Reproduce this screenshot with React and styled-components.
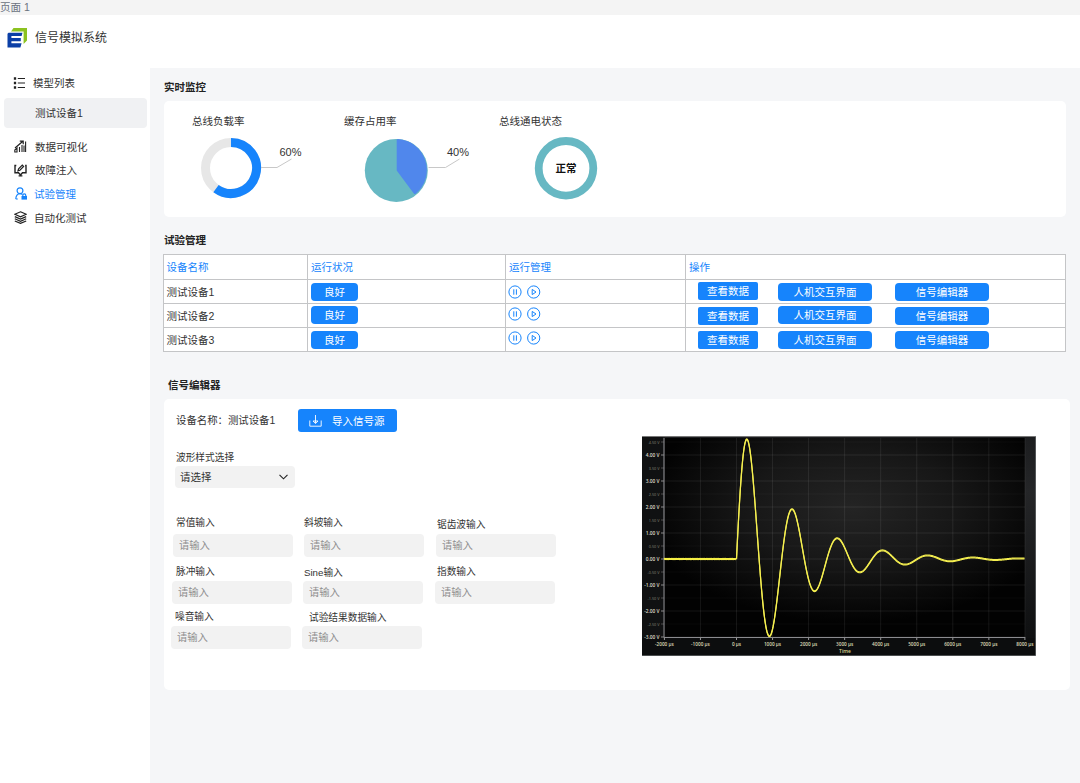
import React from "react";
import styled, { createGlobalStyle } from "styled-components";

const BLUE = "#1684fc";
const TEAL = "#67b8c3";

const GlobalStyle = createGlobalStyle`
  * {
    box-sizing: border-box;
  }

  body {
    margin: 0;
    background: #fff;
    color: #333;
    font-family: "Liberation Sans", "Noto Sans CJK SC", sans-serif;
    font-size: 10.5px;
    line-height: 16px;
  }
`;

const Page = styled.div`
  width: 1080px;
  height: 783px;
  overflow: hidden;
`;

const TabBar = styled.div`
  height: 15px;
  background: #f4f4f4;
  color: #6b7280;
  line-height: 15px;
  white-space: pre;
`;

const Header = styled.header`
  display: flex;
  align-items: center;
  height: 53px;
  padding: 0 0 8px 7px;
  gap: 8px;
  font-size: 12px;
`;

const Body = styled.div`
  display: flex;
  height: 715px;
`;

const Sidebar = styled.nav`
  width: 150px;
  padding-top: 3px;
`;

const NavItem = styled.div`
  display: flex;
  align-items: center;
  height: 23.7px;
  padding-left: ${props => props.$left || 14}px;
  gap: ${props => props.$gap || 8}px;
  color: ${props => (props.$active ? BLUE : "#333")};
`;

const SubItem = styled.div`
  height: 30px;
  margin: 3.3px 3px 6.7px 4px;
  padding-left: 31px;
  border-radius: 4px;
  background: #f0f1f3;
  line-height: 30px;
`;

const Main = styled.main`
  flex: 1;
  padding: 11px 0 0 14px;
  background: #f5f6f8;
`;

const SectionTitle = styled.h2`
  margin: 0 0 0 ${props => props.$left || 0}px;
  color: #222;
  font-size: 10.5px;
  font-weight: 700;
  line-height: 16px;
`;

const MonitorCard = styled.section`
  display: grid;
  grid-template-columns: 152px 155px 1fr;
  width: 902px;
  height: 116px;
  margin: 6px 0 15px;
  padding: 12px 0 0 28px;
  border-radius: 5px;
  background: #fff;
`;

const GaugeDrawing = styled.svg`
  display: block;
  margin-top: 5px;
  font-size: 11px;
`;

const Table = styled.div`
  width: 903px;
  margin: 6px 0 25px -1px;
  border-top: 1px solid #c4c5c7;
  border-left: 1px solid #c4c5c7;
  background: #fff;
`;

const Row = styled.div`
  display: grid;
  grid-template-columns: 144px 198px 180px 380px;
  grid-template-rows: 100%;
  height: ${props => (props.$head ? 25 : 24)}px;
  color: ${props => (props.$head ? BLUE : "#333")};
  line-height: 24px;
`;

const Cell = styled.div`
  display: flex;
  align-items: flex-start;
  padding-left: ${props => props.$left || 3}px;
  border-right: 1px solid #c4c5c7;
  border-bottom: 1px solid #c4c5c7;
`;

const Button = styled.button`
  width: ${props => props.$width}px;
  height: 18px;
  margin: ${props => props.$top}px ${props => props.$gap || 0}px 0 0;
  padding: 0;
  border: 0;
  border-radius: ${props => props.$radius || 4}px;
  background: ${BLUE};
  color: #fff;
  font-family: inherit;
  font-size: 10.5px;
  line-height: 18px;
`;

const RunIcons = styled.svg`
  margin-top: ${props => props.$top}px;
`;

const EditorCard = styled.section`
  display: flex;
  width: 906px;
  height: 291px;
  margin-top: 6px;
  border-radius: 5px;
  background: #fff;
`;

const Editor = styled.div`
  width: 478px;
  padding: 10px 0 0 7px;
`;

const DeviceLine = styled.div`
  display: flex;
  align-items: center;
  padding-left: 5px;
  font-size: 10.4px;
`;

const DeviceName = styled.span`
  width: 122px;
`;

const ImportButton = styled.button`
  display: flex;
  align-items: center;
  width: 99px;
  height: 23px;
  padding: 0 0 0 11px;
  gap: 10px;
  border: 0;
  border-radius: 3px;
  background: ${BLUE};
  color: #fff;
  font-family: inherit;
  font-size: 10.5px;
`;

const SelectLabel = styled.div`
  margin: 18px 0 0 5px;
  font-size: 9.7px;
  line-height: 15px;
`;

const Select = styled.div`
  display: flex;
  align-items: center;
  justify-content: space-between;
  width: 120px;
  height: 22px;
  margin: 1px 0 21.5px 4px;
  padding: 0 7px 0 5px;
  border-radius: 4px;
  background: #f2f2f2;
`;

const Fields = styled.div`
  display: grid;
  grid-template-columns: 131px 132px 132px;
  grid-template-rows: 47px 47px 45px;
`;

const Field = styled.div`
  display: flex;
  flex-direction: column;
  justify-content: flex-end;
  padding-left: ${props => props.$left}px;
`;

const FieldLabel = styled.label`
  padding: 0 0 ${props => props.$bottom}px ${props => props.$left}px;
  font-size: 9.7px;
  line-height: 14px;
`;

const Input = styled.input`
  width: 120px;
  height: 23px;
  padding: 0 6px;
  border: 0;
  border-radius: 4px;
  background: #f2f2f2;
  font-family: inherit;
  font-size: 10.3px;

  &::placeholder {
    color: #8f8f8f;
  }
`;

const Scope = styled.svg`
  margin-top: 37px;
  font-family: "Open Sans", "Noto Sans", sans-serif;
`;

const rows = [
  { name: "测试设备1", tops: [3, 2, 3, 3], icons: 5 },
  { name: "测试设备2", tops: [2, 3, 2, 3], icons: 3 },
  { name: "测试设备3", tops: [3, 3, 3, 3], icons: 3 }
];

const fields = [
  { label: "常值输入", left: 2, labelLeft: 3, bottom: 4 },
  { label: "斜坡输入", left: 2, labelLeft: 0, bottom: 4 },
  { label: "锯齿波输入", left: 2, labelLeft: 1, bottom: 2 },
  { label: "脉冲输入", left: 1, labelLeft: 4, bottom: 2 },
  { label: "Sine输入", left: 1, labelLeft: 1, bottom: 1 },
  { label: "指数输入", left: 1, labelLeft: 2, bottom: 2 },
  { label: "噪音输入", left: 0, labelLeft: 4, bottom: 2 },
  { label: "试验结果数据输入", left: 0, labelLeft: 7, bottom: 1 }
];

function Logo() {
  return (
    <svg width="20" height="20" viewBox="0 0 20 20">
      <path d="M6.5 0H20v12.5L16.6 16V3.4H4z" fill="#8cc220" />
      <path d="M1.5 4.8h14L14.6 8H4.4v2h9.4v3.2H4.4v2h10.2L13.4 19.5H.5V5.8z" fill="#0b3fa6" />
    </svg>
  );
}

function ListIcon() {
  return (
    <svg width="13" height="12" viewBox="0 0 13 12" fill="none" stroke="#222">
      <path d="M4.8 1.5H12M4.8 6H12M4.8 10.5H12" strokeWidth="1.1" />
      <path d="M1.4.9h1.2v1.2H1.4zM1.4 5.4h1.2v1.2H1.4zM1.4 9.9h1.2v1.2H1.4z" strokeWidth="1.1" />
    </svg>
  );
}

function ChartIcon() {
  return (
    <svg width="13" height="13" viewBox="0 0 13 13" fill="none" stroke="#222">
      <path d="M.8 12V10L3 8v4zM5.5 12V7M8 12V5M10 12V5.5M11.6 12V1.5" strokeWidth="1.1" />
      <path d="M1 8 8.6 1.5M5.8 1.2h3.4v3" strokeWidth="1.2" />
    </svg>
  );
}

function InjectIcon() {
  return (
    <svg width="13" height="13" viewBox="0 0 13 13" fill="none" stroke="#222" strokeWidth="1.4">
      <path d="M2.3 1.5H1v7.2h3.5L6.5 11l2-2.3H12V1.5h-.9M4.6 11.9h3.8" />
      <path d="m4 6.8.6-1.9L8.3 1.2l1.3 1.3-3.7 3.7z" strokeWidth="1.2" />
    </svg>
  );
}

function UserIcon() {
  return (
    <svg width="12" height="13" viewBox="0 0 12 13" fill="none" stroke={BLUE} strokeWidth="1.2">
      <circle cx="5" cy="3.7" r="2.9" />
      <path d="M.8 12c0-3.3 1.7-5.4 4.2-5.4 1 0 1.8.3 2.5.9M.8 12h2" />
      <path d="M6.5 9H12v3.6H6.5z" fill={BLUE} stroke="none" />
      <path d="M7.8 9.2V8.4a1.5 1.5 0 0 1 3 0v.8" />
    </svg>
  );
}

function StackIcon() {
  return (
    <svg width="13" height="13" viewBox="0 0 13 13" fill="none" stroke="#222" strokeWidth="1.2">
      <path d="M6.5.8 12.2 3.3 6.5 5.8.8 3.3z" />
      <path d="m.8 5.6 5.7 2.5 5.7-2.5M.8 7.8l5.7 2.5 5.7-2.5M.8 10l5.7 2.4 5.7-2.4" />
    </svg>
  );
}

function LoadGauge() {
  return (
    <div>
      总线负载率
      <GaugeDrawing width="125" height="72">
        <circle cx="39" cy="34" r="25.5" fill="none" stroke="#e7e7e7" strokeWidth="9" />
        <path
          d="M39 8.5A25.5 25.5 0 1 1 24 54.6"
          fill="none"
          stroke={BLUE}
          strokeWidth="9"
        />
        <path d="M69 33.5h16l14.5-8.5" fill="none" stroke="#c8c8c8" />
        <text x="87.5" y="21.5" fill="#333">60%</text>
      </GaugeDrawing>
    </div>
  );
}

function CacheGauge() {
  return (
    <div>
      缓存占用率
      <GaugeDrawing width="140" height="72">
        <circle cx="52.3" cy="36.4" r="31.5" fill={TEAL} />
        <path
          d="M52.7 6.3Q52.7 5 54 5A31 31 0 0 1 72 59.5Q70.7 60.7 69.8 59.5L52.7 36.4z"
          fill="#5087ec"
        />
        <path d="M84.5 33.5h17l14-8.5" fill="none" stroke="#c8c8c8" />
        <text x="103" y="21.5" fill="#333">40%</text>
      </GaugeDrawing>
    </div>
  );
}

function PowerGauge() {
  return (
    <div>
      总线通电状态
      <GaugeDrawing width="120" height="72">
        <circle cx="67" cy="34.3" r="27.3" fill="none" stroke={TEAL} strokeWidth="7.8" />
        <text x="67" y="38" textAnchor="middle" fontSize="10.5" fontWeight="700" fill="#111">
          正常
        </text>
      </GaugeDrawing>
    </div>
  );
}

function RunControls({ top }) {
  return (
    <RunIcons $top={top} width="34" height="14" fill="none" stroke={BLUE}>
      <circle cx="7" cy="7" r="6.1" />
      <path d="M5.8 4.3v5.4M8.4 4.3v5.4" />
      <circle cx="25.7" cy="7" r="6.1" />
      <path d="M24.2 4.4v5.2L28 7z" />
    </RunIcons>
  );
}

function DeviceTable() {
  return (
    <Table>
      <Row $head>
        <Cell $left={2.5}>设备名称</Cell>
        <Cell>运行状况</Cell>
        <Cell>运行管理</Cell>
        <Cell>操作</Cell>
      </Row>
      {rows.map(row => (
        <Row key={row.name}>
          <Cell $left={2.5}>{row.name}</Cell>
          <Cell>
            <Button $width={47} $top={row.tops[0]}>良好</Button>
          </Cell>
          <Cell $left={2}>
            <RunControls top={row.icons} />
          </Cell>
          <Cell $left={12}>
            <Button $width={60} $top={row.tops[1]} $gap={20} $radius={2}>查看数据</Button>
            <Button $width={94} $top={row.tops[2]} $gap={23}>人机交互界面</Button>
            <Button $width={94} $top={row.tops[3]}>信号编辑器</Button>
          </Cell>
        </Row>
      ))}
    </Table>
  );
}

// plot area: x 22..383, zero volt line at y 123, 26px per volt
const ORIGIN_X = 94.5;
const ZERO_Y = 123;
const VOLT = 26;
const STEP_X = 36.05;

// offset shifts the trace vertically, two shifted copies make the flat parts thicker
function dampedWave(offset) {
  const points = [];
  for (let t = 0; t <= 288.4; t += 0.6) {
    const volts = 5.68 * Math.exp(-0.0194 * t) * Math.sin((t * Math.PI) / 22.6);
    points.push(`${(ORIGIN_X + t).toFixed(2)},${(ZERO_Y + offset - volts * VOLT).toFixed(2)}`);
  }
  return points.join(" ");
}

// thin ripple on the flat part before the trigger
function idleNoise() {
  const points = [];
  for (let x = 22; x <= ORIGIN_X; x += 1) {
    points.push(`${x},${(ZERO_Y + Math.sin(x * 2.7) * 0.2).toFixed(2)}`);
  }
  return points.join(" ");
}

function Oscilloscope() {
  const halfVolts = [];
  for (let v = 4.5; v >= -3; v -= 0.5) {
    halfVolts.push(v);
  }
  const times = [-2, -1, 0, 1, 2, 3, 4, 5, 6, 7, 8];

  return (
    <Scope width="394" height="220">
      <defs>
        <radialGradient id="screen" cx="52%" cy="35%" r="58%">
          <stop offset="0" stopColor="#242424" />
          <stop offset=".5" stopColor="#171717" />
          <stop offset="1" stopColor="#020202" />
        </radialGradient>
        <linearGradient id="frame" x2="0" y2="1">
          <stop offset="0" stopColor="#1c1d1f" />
          <stop offset=".25" stopColor="#252628" />
          <stop offset="1" stopColor="#0c0d0e" />
        </linearGradient>
      </defs>
      <rect width="394" height="220" fill="url(#frame)" />
      <rect width="21" height="220" fill="#101112" />
      <rect y="202" width="394" height="18" fill="#0c0d0e" />
      <rect x="22" y="2" width="361" height="199" fill="url(#screen)" />
      {halfVolts.map(v => {
        const y = ZERO_Y - v * VOLT;
        const whole = Number.isInteger(v);
        return (
          <g key={v}>
            <path d={`M22 ${y}h361`} stroke="#fff" strokeOpacity={whole ? 0.08 : 0.03} />
            <path d={`M19 ${y}h3`} stroke="#888" strokeOpacity={whole ? 1 : 0.5} />
            <text
              x="17.5"
              y={y + 1.8}
              textAnchor="end"
              fontSize={whole ? 4.8 : 3.8}
              fontWeight={whole ? 600 : 400}
              fill={whole ? "#dedcc8" : "#8b897c"}
            >
              {v.toFixed(2)} V
            </text>
          </g>
        );
      })}
      {times.map(t => {
        const x = ORIGIN_X + t * STEP_X;
        return (
          <g key={t}>
            <path d={`M${x} 2v199`} stroke="#fff" strokeOpacity=".08" />
            <path d={`M${x} 201v3`} stroke="#999" />
            <text x={x} y="209.5" textAnchor="middle" fontSize="4.7" fontWeight="600" fill="#dedcb8">
              {t * 1000} µs
            </text>
          </g>
        );
      })}
      <path d="M22 2v199.5h361" fill="none" stroke="#8b8b8f" />
      <text x="203" y="217" textAnchor="middle" fontSize="5" fontWeight="600" fill="#d8d48c">
        Time
      </text>
      <polyline points={idleNoise()} fill="none" stroke="#f5ef45" strokeWidth="2.1" />
      <polyline points={dampedWave(-0.4)} fill="none" stroke="#f5ef50" strokeWidth="1.2" />
      <polyline points={dampedWave(0.4)} fill="none" stroke="#f5ef50" strokeWidth="1.2" />
      <path d="M0 .5h394" stroke="#777" />
      <path d="M0 219.5h394M393.5 0v220" stroke="#77797b" strokeOpacity=".6" />
    </Scope>
  );
}

function SignalEditor() {
  return (
    <EditorCard>
      <Editor>
        <DeviceLine>
          <DeviceName>设备名称：测试设备1</DeviceName>
          <ImportButton>
            <svg width="13" height="12" fill="none" stroke="#fff" strokeWidth=".9">
              <path d="M.8 5.5v5.7h11.4V5.5M6.5 0v8M4 6l2.5 2.6L9 6z" />
            </svg>
            导入信号源
          </ImportButton>
        </DeviceLine>
        <SelectLabel>波形样式选择</SelectLabel>
        <Select>
          请选择
          <svg width="9" height="6" fill="none" stroke="#222" strokeWidth="1.1">
            <path d="m.5.8 4 4 4-4" />
          </svg>
        </Select>
        <Fields>
          {fields.map(field => (
            <Field key={field.label} $left={field.left}>
              <FieldLabel $left={field.labelLeft} $bottom={field.bottom}>
                {field.label}
              </FieldLabel>
              <Input placeholder="请输入" />
            </Field>
          ))}
        </Fields>
      </Editor>
      <Oscilloscope />
    </EditorCard>
  );
}

function App() {
  return (
    <Page>
      <GlobalStyle />
      <TabBar>页面 1</TabBar>
      <Header>
        <Logo />
        信号模拟系统
      </Header>
      <Body>
        <Sidebar>
          <NavItem $left={13} $gap={7}>
            <ListIcon />
            模型列表
          </NavItem>
          <SubItem>测试设备1</SubItem>
          <NavItem>
            <ChartIcon />
            数据可视化
          </NavItem>
          <NavItem>
            <InjectIcon />
            故障注入
          </NavItem>
          <NavItem $active $left={15} $gap={7}>
            <UserIcon />
            试验管理
          </NavItem>
          <NavItem $gap={7}>
            <StackIcon />
            自动化测试
          </NavItem>
        </Sidebar>
        <Main>
          <SectionTitle>实时监控</SectionTitle>
          <MonitorCard>
            <LoadGauge />
            <CacheGauge />
            <PowerGauge />
          </MonitorCard>
          <SectionTitle>试验管理</SectionTitle>
          <DeviceTable />
          <SectionTitle $left={4}>信号编辑器</SectionTitle>
          <SignalEditor />
        </Main>
      </Body>
    </Page>
  );
}

export default App;
